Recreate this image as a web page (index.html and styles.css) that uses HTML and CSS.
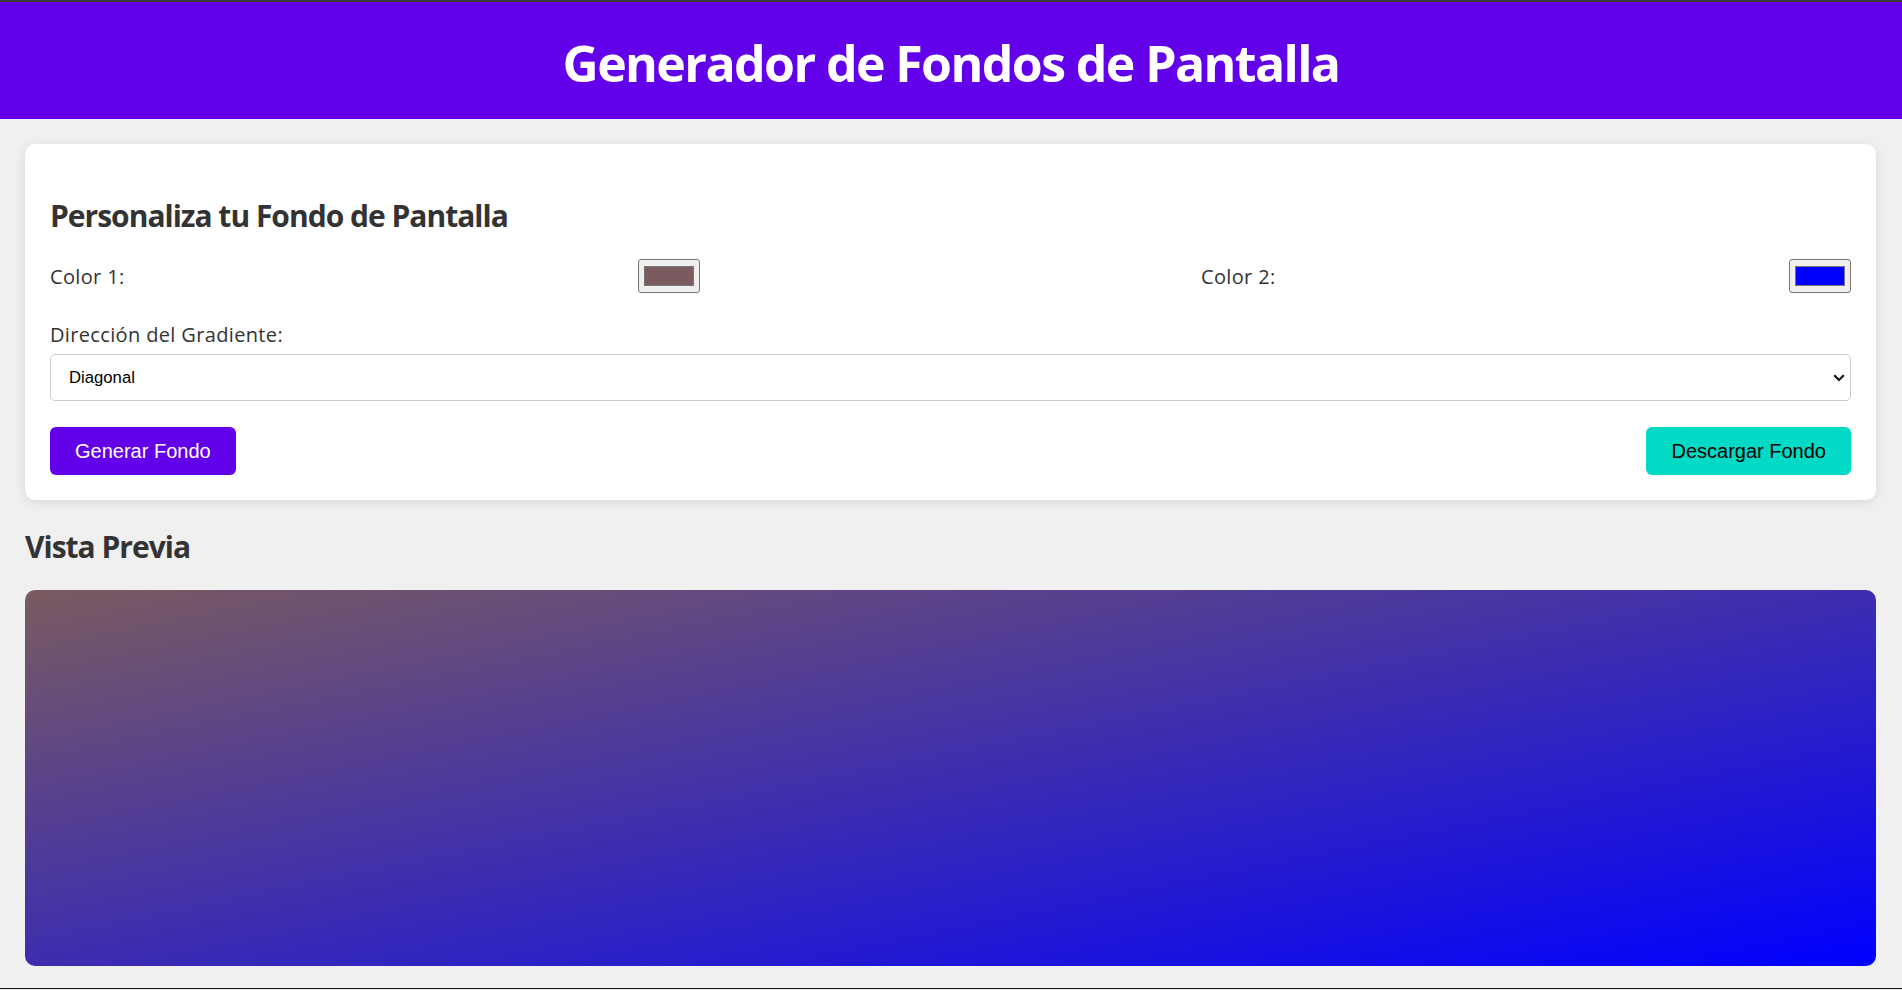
FILE: index.html
```html
<!DOCTYPE html>
<html lang="es">
<head>
<meta charset="utf-8">
<title>Generador de Fondos de Pantalla</title>
<link rel="stylesheet" href="styles.css">
</head>
<body>
<header class="site-header">
  <h1 class="site-title">Generador de Fondos de Pantalla</h1>
</header>
<main class="container">
  <section class="card">
    <h2 class="card-title">Personaliza tu Fondo de Pantalla</h2>
    <div class="color-row">
      <div class="color-group">
        <label class="field-label" for="color1">Color 1:</label>
        <input class="color-input" type="color" id="color1" value="#7a5b60">
      </div>
      <div class="color-group">
        <label class="field-label" for="color2">Color 2:</label>
        <input class="color-input" type="color" id="color2" value="#0000ff">
      </div>
    </div>
    <div class="field">
      <label class="field-label block" for="direction">Dirección del Gradiente:</label>
      <select class="select" id="direction">
        <option>Diagonal</option>
        <option>Horizontal</option>
        <option>Vertical</option>
        <option>Radial</option>
      </select>
    </div>
    <div class="actions">
      <button class="btn btn-primary" type="button">Generar Fondo</button>
      <button class="btn btn-secondary" type="button">Descargar Fondo</button>
    </div>
  </section>
  <h2 class="section-title">Vista Previa</h2>
  <div class="preview"></div>
</main>
</body>
</html>
```
FILE: styles.css
```css
* { box-sizing: border-box; }

html, body {
  margin: 0;
  padding: 0;
}

body {
  background: #f0f0f0;
  color: #333;
  font-family: "Open Sans", "Noto Sans", sans-serif;
  border-top: 2px solid #3b3b3b;
  border-bottom: 1px solid #111;
}

.site-header {
  background: #6200ea;
  color: #fff;
  text-align: center;
  padding: 31px 0 26px;
}

.site-title {
  margin: 0;
  font-size: 50px;
  line-height: 60px;
  font-weight: 700;
  letter-spacing: -1.6px;
}

.container {
  padding: 25px 26px 22px 25px;
}

.card {
  background: #fff;
  border-radius: 10px;
  padding: 0 25px 25px;
  box-shadow: 0 2px 12px rgba(0, 0, 0, 0.1);
  overflow: hidden;
}

.card-title,
.section-title {
  margin: 0;
  font-size: 30px;
  line-height: 40px;
  font-weight: 700;
  color: #333;
  letter-spacing: -1px;
}

.card-title {
  padding-top: 52px;
  margin-bottom: 23px;
}

.section-title {
  padding-top: 27px;
  margin-bottom: 23px;
}

.color-row {
  display: flex;
  justify-content: space-between;
  margin-bottom: 28px;
}

.color-group {
  width: 650px;
  display: flex;
  justify-content: space-between;
  align-items: center;
  height: 34px;
}

.field-label {
  font-size: 20px;
  line-height: 27px;
  color: #333;
  letter-spacing: 0.35px;
}

.field-label.block {
  display: block;
  margin-bottom: 6px;
}

.color-input {
  -webkit-appearance: none;
  appearance: none;
  width: 62px;
  height: 34px;
  padding: 1px 3px;
  border: 1px solid #767676;
  border-radius: 3px;
  background: #efefef;
  cursor: pointer;
}

.color-input::-webkit-color-swatch-wrapper {
  padding: 5px 2px;
}

.color-input::-webkit-color-swatch {
  border: 1px solid #777;
  border-radius: 0;
}

.select {
  -webkit-appearance: none;
  appearance: none;
  display: block;
  width: 100%;
  height: 47px;
  padding: 0 30px 0 18px;
  border: 1px solid #ccc;
  border-radius: 5px;
  background-color: #fff;
  background-image: url("data:image/svg+xml;utf8,<svg xmlns='http://www.w3.org/2000/svg' width='12' height='8' viewBox='0 0 12 8'><path d='M1.2 1.2 L6 6 L10.8 1.2' fill='none' stroke='%23111' stroke-width='2.2'/></svg>");
  background-repeat: no-repeat;
  background-position: right 5px center;
  background-size: 12px 8px;
  font-family: "Liberation Sans", Arial, sans-serif;
  font-size: 16.7px;
  color: #000;
}

.actions {
  display: flex;
  justify-content: space-between;
  margin-top: 26px;
}

.btn {
  border: none;
  border-radius: 6px;
  padding: 0 25px;
  height: 48px;
  font-family: "Liberation Sans", Arial, sans-serif;
  font-size: 20px;
  cursor: pointer;
}

.btn-primary {
  background: #6200ea;
  color: #fff;
}

.btn-secondary {
  background: #03dac6;
  color: #000;
}

.preview {
  height: 376px;
  border-radius: 10px;
  background: linear-gradient(to bottom right, #7a5b60, #0000ff);
}
```
